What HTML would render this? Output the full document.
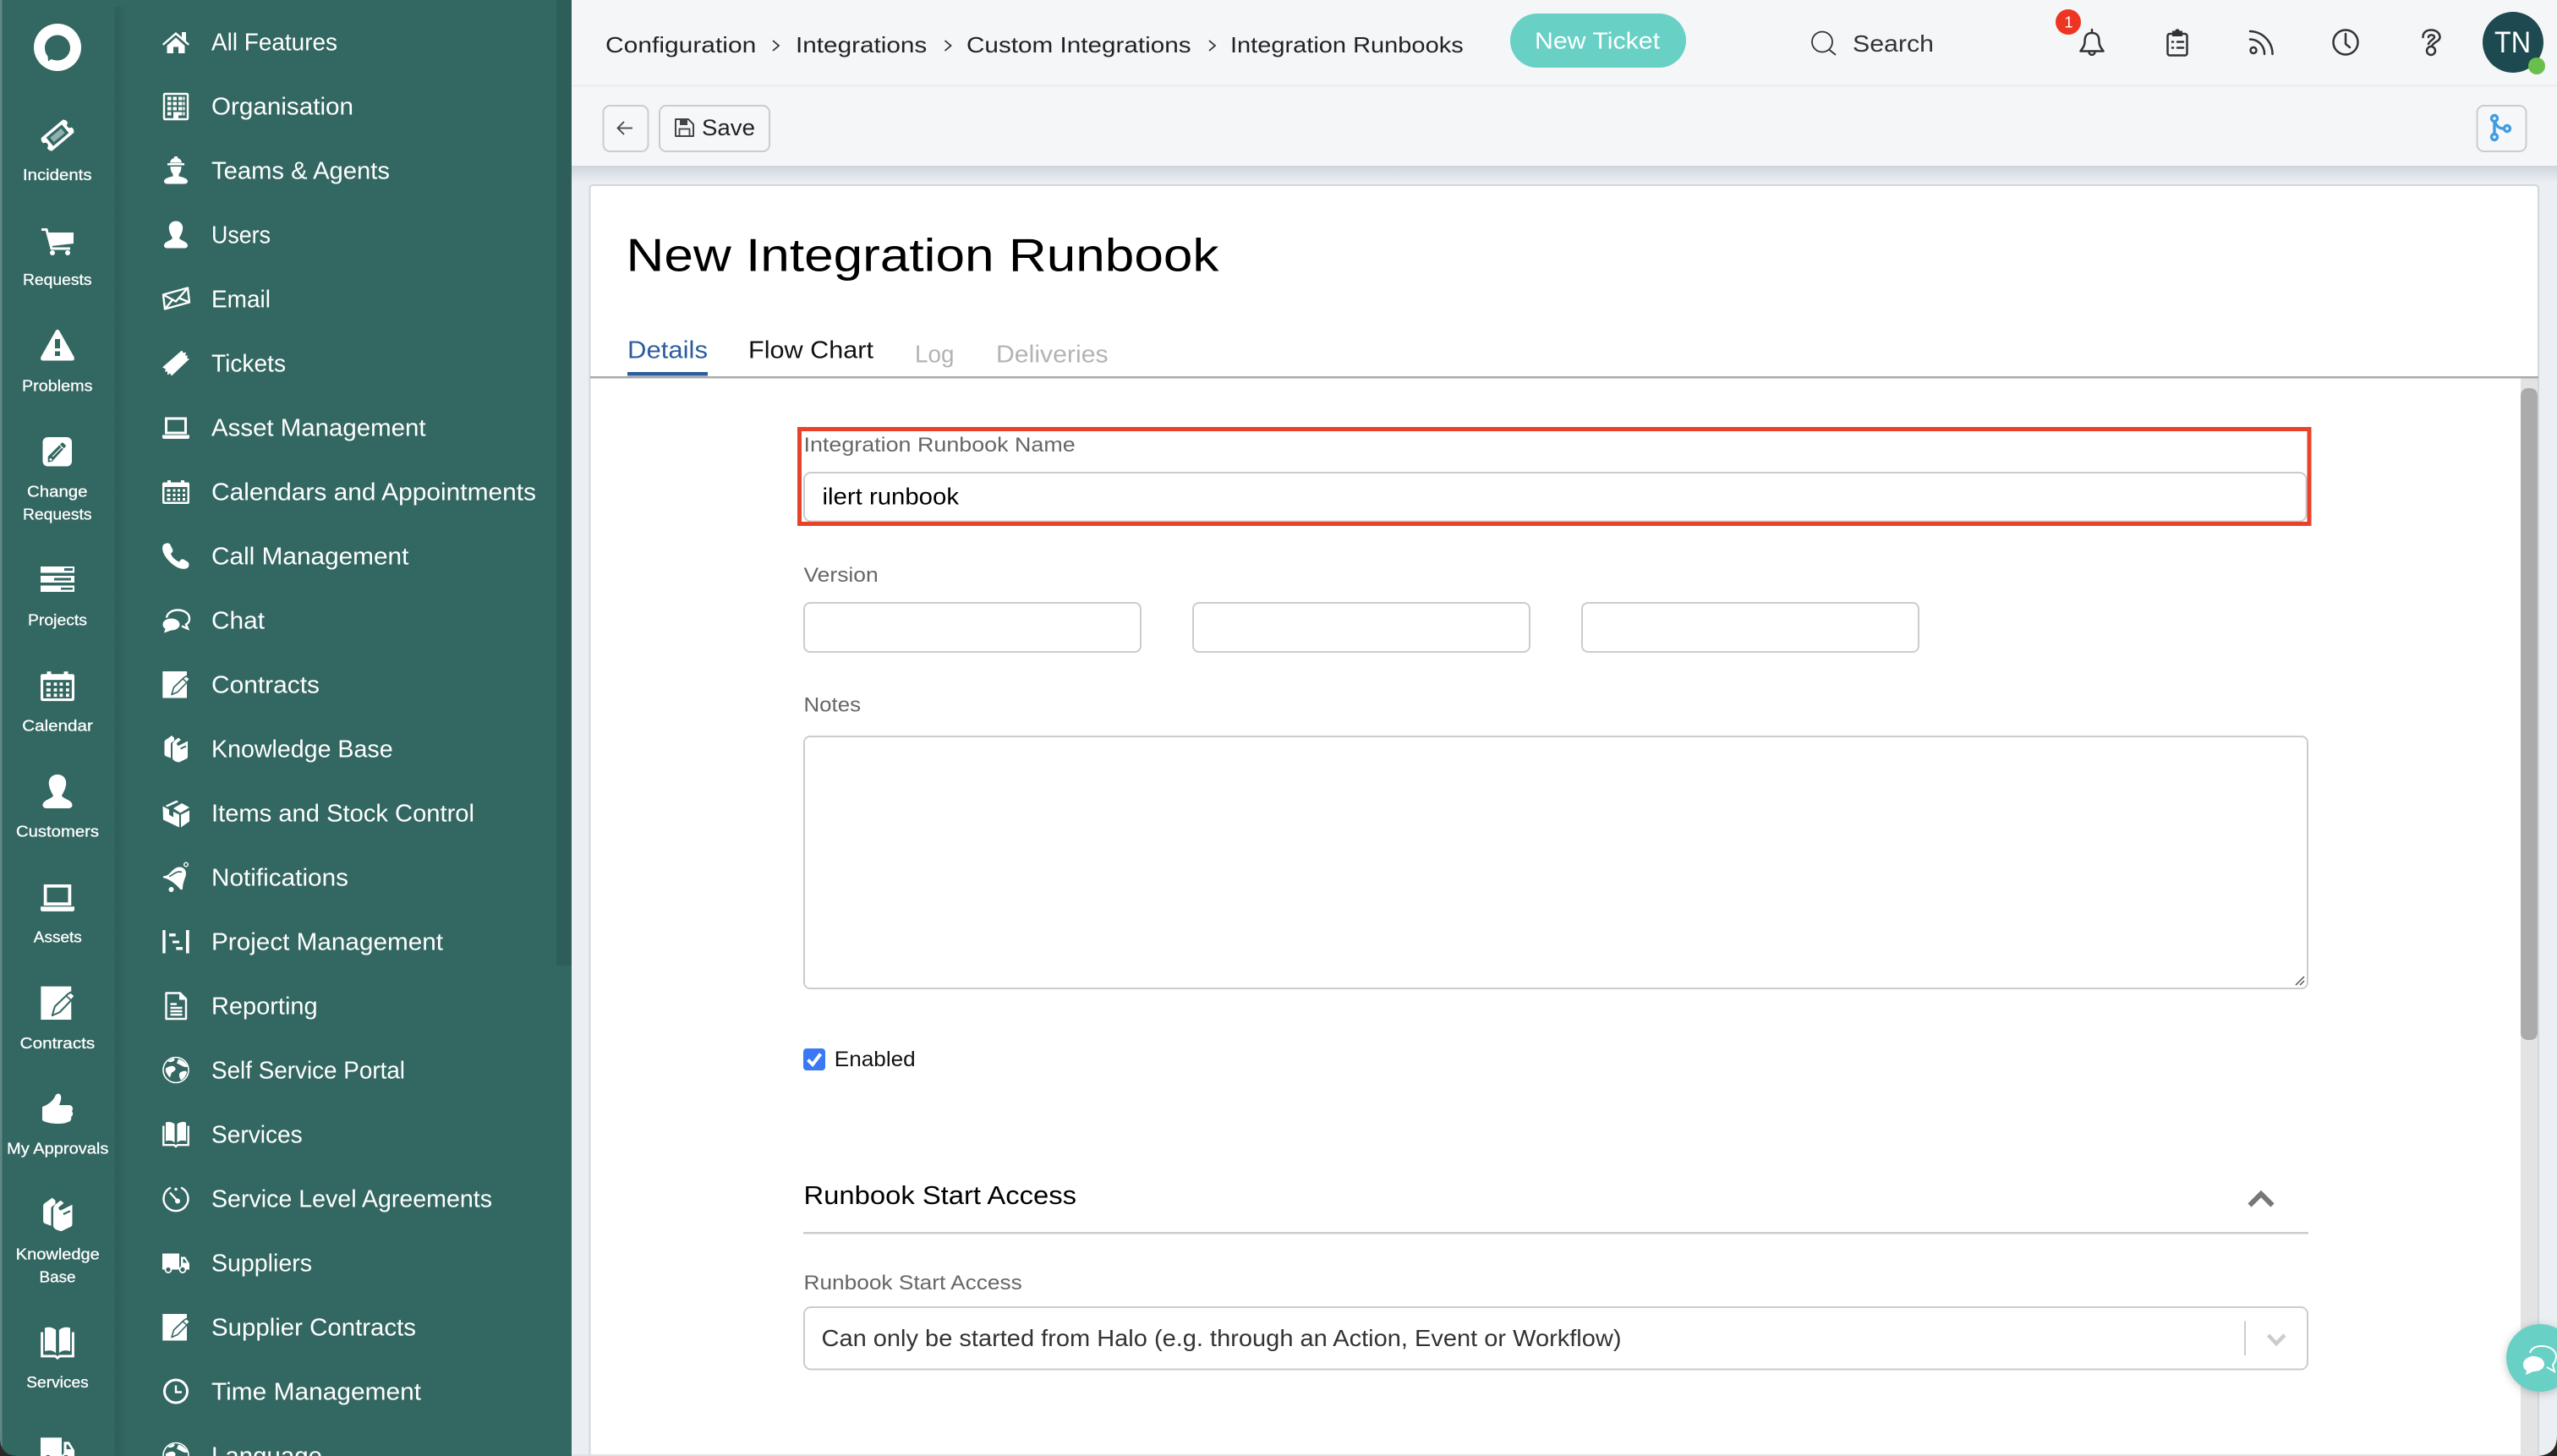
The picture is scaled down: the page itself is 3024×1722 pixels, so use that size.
<!DOCTYPE html>
<html lang="en"><head><meta charset="utf-8"><title>New Integration Runbook</title>
<style>
html,body{margin:0;padding:0;width:3024px;height:1722px;overflow:hidden;background:#ebeef3}
svg{display:block}
text{font-family:"Liberation Sans",sans-serif;white-space:pre}
.m{font-size:28.5px;fill:#fff}
.r{font-size:18.5px;fill:#fff;stroke:#fff;stroke-width:.3px}
.b{font-size:26px;fill:#222}
.l{font-size:24.5px;fill:#666}
.t{font-size:28.5px}
.w{fill:#fff}
.o{fill:none;stroke:#fff;stroke-width:2.4}
.k{fill:none;stroke:#333;stroke-width:2.5;stroke-linecap:round;stroke-linejoin:round}
.bx{fill:#fff;stroke:#ccc;stroke-width:2}
</style></head><body>
<svg xmlns="http://www.w3.org/2000/svg" width="3024" height="1722" viewBox="0 0 3024 1722">
<defs>
<linearGradient id="sh" x1="0" x2="1" y1="0" y2="0"><stop offset="0" stop-color="#2d5e59"/><stop offset="1" stop-color="#336762"/></linearGradient>
<linearGradient id="ts" x1="0" x2="0" y1="0" y2="1"><stop offset="0" stop-color="#cfd5dc"/><stop offset="1" stop-color="#ebeef3"/></linearGradient>
<filter id="fs" x="-30%" y="-30%" width="160%" height="160%"><feDropShadow dx="0" dy="2" stdDeviation="5" flood-color="#000" flood-opacity=".22"/></filter>
<clipPath id="cp"><rect x="0" y="0" width="3024" height="1722"/></clipPath>

<g id="home"><path class="w" d="M-16 2 0-12 7-6V-12H12V-1.500L16 2 14.500 3.800 0-8.800-14.500 3.800Z"/><path class="w" d="M-10.500 4 0-5.500 10.500 4V13H3V5.500H-3V13H-10.500Z"/></g>
<g id="org"><rect x="-14" y="-14.500" width="28" height="30" class="o" rx="1"/><path class="w" d="M-10-11h4.500v4h-4.500zM-3.500-11h4.500v4h-4.500zM3-11h4.500v4H3zM8.500-11h2v4h-2zM-10-5h4.500v4h-4.500zM-3.500-5h4.500v4h-4.500zM3-5h4.500v4H3zM8.500-5h2v4h-2zM-10 1h4.500v4h-4.500zM-3.500 1h4.500v4h-4.500zM3 1h4.500v4H3zM8.500 1h2v4h-2zM-10 7h4.500v4h-4.500zM3 7h4.500v4H3zM8.500 7h2v4h-2zM-3 7H3V15H-3Z"/></g>
<g id="team"><path class="w" d="M-10-8.500H10V-6H-10ZM-7-9A7 6.500 0 0 1-2-14.800V-16.500H2V-14.800A7 6.500 0 0 1 7-9Z"/><path class="w" d="M-6.500-4.500H6.500C6.500 1 4.500 3 3.500 4.500V7C8 8 14 9.500 14 13 14 15 12 16 9 16H-9C-12 16-14 15-14 13-14 9.500-8 8-3.500 7V4.500C-4.500 3-6.500 1-6.500-4.500Z"/></g>
<path id="user" class="w" d="M0-16C-6-16-9-11-8-6-7.500-2-5 2-4 4-5 7-14 8-14 13-14 15-12 16-10 16H10C12 16 14 15 14 13 14 8 5 7 4 4 5 2 7.500-2 8-6 9-11 6-16 0-16Z"/>
<g id="mail"><path class="o" stroke-linejoin="round" d="M-15-5 14-13 16 4-13 12Z"/><path class="o" d="M-15-5 0 3 14-13M-13 12-3 0M16 4 4-1"/></g>
<path id="tick" class="w" d="M-16 5 7-15 9-12 12-13 11-9 14-9 13-6 16-5-5 15-7 12-10 14-10 10-13 10-12 7Z"/>
<path id="lap" class="w" fill-rule="evenodd" d="M-13-12H13V8H-13ZM-10-9V5H10V-9ZM-16 9H16V11.500Q16 13.500 14 13.500H-14Q-16 13.500-16 11.500Z"/>
<g id="cal"><path class="w" fill-rule="evenodd" d="M-14-11H-10V-13.500H-6V-11H6V-13.500H10V-11H14Q16-11 16-9V12Q16 14.500 14 14.500H-14Q-16 14.500-16 12V-9Q-16-11-14-11ZM-13.500-5.500V12H13.500V-5.500Z"/><path class="w" d="M-10.500-3h4v3h-4zM-3.500-3h3v3h-3zM2-3h3v3H2zM8-3h3v3H8zM-10.500 2.500h4v3h-4zM-3.500 2.500h3v3h-3zM2 2.500h3v3H2zM8 2.500h3v3H8zM-10.500 7.500h4v3h-4zM-3.500 7.500h3v3h-3zM2 7.500h3v3H2zM8 7.500h3v3H8z"/></g>
<path id="phone" class="w" d="M-15-13C-13-15-9-16-7-14L-4-8C-3-6-4-4-6-3-5 1-1 5 4 7 5 5 7 3 9 4L14 7C16 9 16 12 14 14 10 17 2 15-5 9-13 2-18-7-15-13Z"/>
<g id="chat"><path class="o" stroke-width="2" d="M-11-3C-10-9-4-12 2-12 10-12 16-8 16-2 16 2 14 4 12 5L14 10 7 7"/><path class="w" d="M-15.500 5C-15.500 1-11-2-5.500-2 0-2 4.500 1 4.500 5 4.500 9 0 12-5.500 12L-14 15-12.500 10C-14.500 9-15.500 7-15.500 5Z"/></g>
<g id="con"><rect x="-15.700" y="-15.500" width="28.700" height="31.500" class="w"/><path d="M-5 12-2.500 3.500 9.500-8 12.500-10 16.500-6.500 14-3.500 2 9Z" class="w" stroke="#336762" stroke-width="1.600" stroke-linejoin="round"/><path d="M8-6.800 13-2.300" stroke="#336762" stroke-width="1.400"/></g>
<g id="kb"><path class="w" d="M-13.500-8C-13.500-10-11-11-9-12.500L-5-15.500-2-13V-9.500L-6-6.500V11L-11.500 9C-13 8.500-13.500 7.500-13.500 6Z"/><path class="w" d="M-4-5C-4-8-1-10 3-13L6-10.500 1-6.500C1-5 2-3.500 3-3.500L14-9V9C14 11 13 12 11 12.500L4 16C1 16-4 14-4 11Z"/><path d="M5.500 0 12-3" stroke="#336762" stroke-width="1.800"/></g>
<g id="box"><path class="w" d="M-3-5.500 7-11.500 16-6.500 5.300 0ZM6 2 16-3V10L6 17ZM-15.500-8-8-4V2L-3 5V-1.500L4 2V17L-15 8ZM-12-9 1-15 3-13-10.500-7Z"/></g>
<g id="bell" transform="translate(2 0)"><path class="w" d="M-16.500-1.500C-12-1-9-5-6-8-2-12 2-13 6.500-11 10-9 10.500-5 9.500-1 8 3 6 8 6 13.500 6 15 4 15 3 14-3 7-10 2-16 1-17 1-17.500-1-16.500-1.500Z"/><path d="M-10-1C-5-2-3-8 5-6" fill="none" stroke="#336762" stroke-width="1.600"/><circle cx="-7.500" cy="14.500" r="3" class="w"/><circle cx="10" cy="-15" r="2.300" fill="none" stroke="#fff" stroke-width="1.400"/></g>
<path id="proj" class="w" d="M-15.700-13.500h3.400v27.500h-3.400zM12-13.500h3.700v27.500H12zM-8-9.500H-.3V-6H-8ZM-4-1H4V2H-4ZM.3 6.500H8V10H.3Z"/>
<g id="rep"><path class="o" stroke-linejoin="round" d="M-11.500-15H5L12-8V15.500H-11.500Z"/><path class="w" d="M4-15 12-7H4Z"/><path class="o" stroke-width="2" d="M-6.500-2H1M-6.500 2.500H7.500M-6.500 6.500H7.500M-6.500 10.500H7.500"/></g>
<g id="globe"><circle r="15" fill="none" stroke="#fff" stroke-width="1.600"/><path class="w" d="M-12-2C-8-5-3-6-1-3 1 0-3 2-5 3L-7 9C-9 7-13 2-12-2ZM3-13C8-12 12-8 14-4 10-2 6-6 1-8ZM5 3C8 1 13 0 13 3 12 7 9 11 6 12 4 9 3 5 5 3ZM-3-14C-1-13-1-11-4-10-7-9-9-9-9-11Z"/></g>
<g id="book"><path class="w" d="M-1.500-12C-5-15-9-15-12-14V8C-8 7-4 7-1.500 10ZM1.500-12C5-15 9-15 12-14V8C8 7 4 7 1.500 10Z"/><path class="o" stroke-width="2.600" d="M-14.700-10V12.700H-2L0 14.500 2 12.700H14.700V-10"/></g>
<g id="sla"><path class="o" stroke-width="3" stroke-linecap="round" d="M-7-12.500A14.500 14.500 0 1 0 7-12.500"/><circle cy="-11" r="1.700" class="w"/><path class="o" stroke-width="2.500" d="M3 4-7-7"/><circle cx="2" cy="3" r="3" class="w"/></g>
<g id="truck"><rect x="-16" y="-11" width="20" height="17" class="w"/><path class="w" fill-rule="evenodd" d="M6-7H11L16 1V6H6ZM8.500-4.500V0H13L10-4.500Z"/><rect x="-16" y="6" width="32" height="2" class="w"/><circle cx="-9" cy="8" r="3.500" fill="#336762" stroke="#fff" stroke-width="1.800"/><circle cx="8" cy="8" r="3.500" fill="#336762" stroke="#fff" stroke-width="1.800"/></g>
<g id="clock"><circle r="13.500" fill="none" stroke="#fff" stroke-width="3"/><path class="o" stroke-width="2.600" d="M0-7V1L7 1"/></g>
</defs>

<g clip-path="url(#cp)">
<!-- page bg -->
<rect width="3024" height="1722" fill="#ebeef3"/>
<!-- top bars -->
<rect x="676" width="2348" height="196" fill="#f5f6f8"/>
<rect x="676" y="100" width="2348" height="2.500" fill="#ecedf1"/>
<rect x="676" y="196" width="2348" height="20" fill="url(#ts)"/>

<!-- sidebar -->
<rect width="676" height="1722" fill="#336762"/>
<rect x="136" y="8" width="14" height="1714" fill="url(#sh)"/>
<rect x="658" width="18" height="1142" fill="#2e5e59"/>
<rect width="2.500" height="1722" fill="#5f8783"/>

<!-- logo -->
<circle cx="68" cy="56" r="28" fill="#fff"/>
<path d="M68 41.500C76 41.500 83 48 83 56.500 83 65 76 71.500 68 71.500 65 71.500 62.500 70.500 60.500 70L57 72.500 56.500 66.500C54 63.500 53 60 53 56.500 53 48 60 41.500 68 41.500Z" fill="#336762"/>

<!-- rail icons -->
<g transform="translate(68 160) rotate(-40)"><path class="w" d="M-19-7-17-10H17L19-7V-3.500A3.500 3.500 0 0 0 19 3.500V7L17 10H-17L-19 7V3.500A3.500 3.500 0 0 0-19-3.500Z"/><rect x="-12" y="-6.500" width="24" height="13" fill="#336762"/><rect x="-8.500" y="-3.500" width="17" height="7" fill="#8fb0ac"/></g>
<g transform="translate(68 286)"><path class="w" d="M-11-11H19V2L-7 5Z"/><path d="M-19-14.500H-13L-7 8H15" fill="none" stroke="#fff" stroke-width="3"/><circle cx="-6" cy="13" r="3" class="w"/><circle cx="12" cy="13" r="3" class="w"/></g>
<g transform="translate(68 408)"><path class="w" fill-rule="evenodd" d="M-2-17Q0-19.500 2-17L19.500 14Q21 18.500 17 18.500H-17Q-21 18.500-19.500 14ZM-3-7V4H3V-7ZM-3 7.500V13H3V7.500Z"/></g>
<g transform="translate(68 534)"><rect x="-17.500" y="-17" width="34.500" height="34.500" rx="6" class="w"/><path d="M-11.300 12.700-11.300 6 4.700-10Q6-11 7-10L9.500-7.500Q10.500-6.500 9.300-5.500L-6.300 11.700Z" fill="#336762"/><path d="M-6 6 5-5M2.500-8 7.500-3" stroke="#fff" stroke-width="1.200"/><circle cx="-8" cy="9.500" r="1.500" class="w"/></g>
<g transform="translate(68 685)"><path class="w" fill-rule="evenodd" d="M-20-15H20V-7.500H-20ZM8-13V-10H18V-13ZM-20-4H20V4H-20ZM-4-1.500V1.500H16V-1.500ZM-20 7.500H20V15H-20ZM4 10V12.500H18V10Z"/></g>
<use href="#cal" transform="translate(68 811) scale(1.25)"/>
<use href="#user" transform="translate(68 936) scale(1.25)"/>
<use href="#lap" transform="translate(68 1061) scale(1.25)"/>
<use href="#con" transform="translate(68 1186) scale(1.25)"/>
<path class="w" transform="translate(68 1311)" d="M-18-2C-12-4-6-8-3-14-2-18 3-19 4-15 5-11 3-7 2-4H14C18-4 19 1 17 3 19 6 18 9 16 10 17 13 15 16 12 16 8 19-10 19-18 14Z"/>
<use href="#kb" transform="translate(68 1436) scale(1.25)"/>
<use href="#book" transform="translate(68 1588) scale(1.25)"/>
<use href="#truck" transform="translate(68 1714) scale(1.25)"/>

<!-- rail labels -->
<text class="r" x="27" y="212.800" textLength="81.500" lengthAdjust="spacingAndGlyphs">Incidents</text>
<text class="r" x="27" y="336.800" textLength="81.500" lengthAdjust="spacingAndGlyphs">Requests</text>
<text class="r" x="26" y="462.400" textLength="83.500" lengthAdjust="spacingAndGlyphs">Problems</text>
<text class="r" x="32" y="587.500" textLength="71.500" lengthAdjust="spacingAndGlyphs">Change</text>
<text class="r" x="27" y="614.400" textLength="81.500" lengthAdjust="spacingAndGlyphs">Requests</text>
<text class="r" x="33" y="739.400" textLength="70" lengthAdjust="spacingAndGlyphs">Projects</text>
<text class="r" x="26.300" y="864.700" textLength="83.500" lengthAdjust="spacingAndGlyphs">Calendar</text>
<text class="r" x="19" y="989.700" textLength="98" lengthAdjust="spacingAndGlyphs">Customers</text>
<text class="r" x="39.800" y="1114.500" textLength="57" lengthAdjust="spacingAndGlyphs">Assets</text>
<text class="r" x="23.700" y="1239.900" textLength="88.600" lengthAdjust="spacingAndGlyphs">Contracts</text>
<text class="r" x="8" y="1364.700" textLength="120.400" lengthAdjust="spacingAndGlyphs">My Approvals</text>
<text class="r" x="18.800" y="1489.500" textLength="99" lengthAdjust="spacingAndGlyphs">Knowledge</text>
<text class="r" x="46.500" y="1516.400" textLength="43" lengthAdjust="spacingAndGlyphs">Base</text>
<text class="r" x="31.300" y="1641.200" textLength="73.400" lengthAdjust="spacingAndGlyphs">Services</text>

<!-- main menu icons -->
<use href="#home" transform="translate(208 50)"/>
<use href="#org" transform="translate(208 125.500)"/>
<use href="#team" transform="translate(208 201.500)"/>
<use href="#user" transform="translate(208 277.500)"/>
<use href="#mail" transform="translate(208 353.500)"/>
<use href="#tick" transform="translate(208 429.500)"/>
<use href="#lap" transform="translate(208 505.500)"/>
<use href="#cal" transform="translate(208 581.500)"/>
<use href="#phone" transform="translate(208 657.500)"/>
<use href="#chat" transform="translate(208 733.500)"/>
<use href="#con" transform="translate(208 809.500)"/>
<use href="#kb" transform="translate(208 885.500)"/>
<use href="#box" transform="translate(208 961.500)"/>
<use href="#bell" transform="translate(208 1037.500)"/>
<use href="#proj" transform="translate(208 1113.500)"/>
<use href="#rep" transform="translate(208 1189.500)"/>
<use href="#globe" transform="translate(208 1265.500)"/>
<use href="#book" transform="translate(208 1341.500)"/>
<use href="#sla" transform="translate(208 1417.500)"/>
<use href="#truck" transform="translate(208 1493.500)"/>
<use href="#con" transform="translate(208 1569.500)"/>
<use href="#clock" transform="translate(208 1645.500)"/>
<use href="#globe" transform="translate(208 1721.500)"/>

<!-- main menu text -->
<text class="m" x="250" y="59.300" textLength="149" lengthAdjust="spacingAndGlyphs">All Features</text>
<text class="m" x="250" y="135.300" textLength="168" lengthAdjust="spacingAndGlyphs">Organisation</text>
<text class="m" x="250" y="211.300" textLength="211" lengthAdjust="spacingAndGlyphs">Teams &amp; Agents</text>
<text class="m" x="250" y="287.300" textLength="70" lengthAdjust="spacingAndGlyphs">Users</text>
<text class="m" x="250" y="363.300" textLength="70" lengthAdjust="spacingAndGlyphs">Email</text>
<text class="m" x="250" y="439.300" textLength="88" lengthAdjust="spacingAndGlyphs">Tickets</text>
<text class="m" x="250" y="515.300" textLength="253.600" lengthAdjust="spacingAndGlyphs">Asset Management</text>
<text class="m" x="250" y="591.300" textLength="384" lengthAdjust="spacingAndGlyphs">Calendars and Appointments</text>
<text class="m" x="250" y="667.300" textLength="233.400" lengthAdjust="spacingAndGlyphs">Call Management</text>
<text class="m" x="250" y="743.300" textLength="63" lengthAdjust="spacingAndGlyphs">Chat</text>
<text class="m" x="250" y="819.300" textLength="128" lengthAdjust="spacingAndGlyphs">Contracts</text>
<text class="m" x="250" y="895.300" textLength="214.600" lengthAdjust="spacingAndGlyphs">Knowledge Base</text>
<text class="m" x="250" y="971.300" textLength="311" lengthAdjust="spacingAndGlyphs">Items and Stock Control</text>
<text class="m" x="250" y="1047.300" textLength="162" lengthAdjust="spacingAndGlyphs">Notifications</text>
<text class="m" x="250" y="1123.300" textLength="274" lengthAdjust="spacingAndGlyphs">Project Management</text>
<text class="m" x="250" y="1199.300" textLength="125.600" lengthAdjust="spacingAndGlyphs">Reporting</text>
<text class="m" x="250" y="1275.300" textLength="229" lengthAdjust="spacingAndGlyphs">Self Service Portal</text>
<text class="m" x="250" y="1351.300" textLength="107.700" lengthAdjust="spacingAndGlyphs">Services</text>
<text class="m" x="250" y="1427.300" textLength="332" lengthAdjust="spacingAndGlyphs">Service Level Agreements</text>
<text class="m" x="250" y="1503.300" textLength="119" lengthAdjust="spacingAndGlyphs">Suppliers</text>
<text class="m" x="250" y="1579.300" textLength="242" lengthAdjust="spacingAndGlyphs">Supplier Contracts</text>
<text class="m" x="250" y="1655.300" textLength="248" lengthAdjust="spacingAndGlyphs">Time Management</text>
<text class="m" x="250" y="1731.300" textLength="131" lengthAdjust="spacingAndGlyphs">Language</text>

<!-- breadcrumb -->
<text class="b" x="716" y="62" textLength="178.300" lengthAdjust="spacingAndGlyphs">Configuration</text>
<path d="M914 48 921 54 914 60" fill="none" stroke="#333" stroke-width="1.800"/>
<text class="b" x="941" y="62" textLength="155.300" lengthAdjust="spacingAndGlyphs">Integrations</text>
<path d="M1117.500 48 1124.500 54 1117.500 60" fill="none" stroke="#333" stroke-width="1.800"/>
<text class="b" x="1143" y="62" textLength="265.600" lengthAdjust="spacingAndGlyphs">Custom Integrations</text>
<path d="M1430 48 1437 54 1430 60" fill="none" stroke="#333" stroke-width="1.800"/>
<text class="b" x="1455" y="62" textLength="275.700" lengthAdjust="spacingAndGlyphs">Integration Runbooks</text>

<!-- New ticket -->
<rect x="1786" y="16" width="208" height="64" rx="32" fill="#68d0c5"/>
<text x="1815" y="57.500" font-size="27.500" fill="#fff" textLength="148" lengthAdjust="spacingAndGlyphs">New Ticket</text>

<!-- search -->
<circle cx="2155" cy="49.500" r="12" fill="none" stroke="#333" stroke-width="1.800"/>
<path d="M2163 58.500 2171 65" stroke="#333" stroke-width="1.800"/>
<text x="2191" y="61" font-size="27.500" fill="#333" textLength="96" lengthAdjust="spacingAndGlyphs">Search</text>

<!-- header icons -->
<path class="k" d="M2474 39C2466 39 2465.500 45 2465.500 50 2465.500 55 2462 58 2460.500 60.500H2487.500C2486 58 2482.500 55 2482.500 50 2482.500 45 2482 39 2474 39ZM2474 35V39M2470.500 61.500C2471 66 2477 66 2477.500 61.500"/>
<circle cx="2446" cy="26" r="15" fill="#ee3524"/>
<text x="2441.500" y="32.500" font-size="18" fill="#fff">1</text>
<rect x="2563.500" y="40" width="23" height="25.500" rx="2.500" class="k"/>
<path d="M2569 36.500H2572.500C2572.500 33.500 2577.500 33.500 2577.500 36.500H2581V43H2569Z" fill="#333"/>
<path d="M2575 49.500H2582M2575 56.500H2582M2569 49.500H2570M2569 56.500H2570" class="k" stroke-width="2"/>
<circle cx="2665" cy="59.500" r="3.500" class="k"/>
<path class="k" d="M2661 46.500A17 17 0 0 1 2678 64M2661 37A27 27 0 0 1 2687.500 64"/>
<circle cx="2774" cy="50" r="14.500" class="k"/>
<path class="k" d="M2774 40V52L2779 56"/>
<path class="k" d="M2865.500 44C2865.500 38 2870 35.500 2875 35.500 2881 35.500 2885.500 39 2885.500 44 2885.500 49 2878 49.500 2876 54.500"/>
<path class="k" stroke-width="2" d="M2872 44C2872 40.500 2879 40.500 2879 44 2879 46 2873.500 48 2872 52"/>
<circle cx="2875" cy="60" r="5" class="k"/>

<!-- avatar -->
<circle cx="2972" cy="50" r="36" fill="#1d4a50"/>
<text x="2950" y="62" font-size="35" fill="#fff" textLength="43" lengthAdjust="spacingAndGlyphs">TN</text>
<circle cx="3000" cy="78" r="10" fill="#6abf4b"/>

<!-- toolbar -->
<rect x="713.500" y="125" width="53" height="54" rx="8" fill="#f6f7f9" stroke="#ccc" stroke-width="2"/>
<path d="M748 151.500H731M738 144 730.500 151.500 738 159" fill="none" stroke="#444" stroke-width="1.800"/>
<rect x="780" y="125" width="130" height="54" rx="8" fill="#f6f7f9" stroke="#ccc" stroke-width="2"/>
<path d="M799 141H814L820 147V161H799Z" fill="none" stroke="#444" stroke-width="2" stroke-linejoin="round"/>
<path d="M804 141H813V148H804Z" fill="#444"/><rect x="803.500" y="152.500" width="12" height="8.500" fill="none" stroke="#444" stroke-width="1.800"/>
<text x="830" y="160" font-size="26.500" fill="#222" textLength="63" lengthAdjust="spacingAndGlyphs">Save</text>
<rect x="2929.500" y="125" width="58" height="54" rx="8" fill="#f6f7f9" stroke="#ccc" stroke-width="2"/>
<g fill="none" stroke="#3f9de2" stroke-width="3.400"><path d="M2950 144V158M2951 145C2953 150 2956 152 2961 152"/><circle cx="2950" cy="140" r="3.500"/><circle cx="2950" cy="162" r="3.500"/><circle cx="2965" cy="152" r="3.500"/></g>

<!-- card -->
<path d="M697.500 1722V223Q697.500 219 701.500 219H2998Q3002 219 3002 223V1722Z" fill="#fff" stroke="#d1d7de" stroke-width="2"/>

<text x="740.500" y="320.700" font-size="55" fill="#000" textLength="701" lengthAdjust="spacingAndGlyphs">New Integration Runbook</text>

<!-- tabs -->
<text class="t" x="742" y="423.300" fill="#2b5d9e" textLength="95" lengthAdjust="spacingAndGlyphs">Details</text>
<rect x="742" y="440" width="95" height="4.500" fill="#2b5d9e"/>
<text class="t" x="885" y="423.300" fill="#111" textLength="148" lengthAdjust="spacingAndGlyphs">Flow Chart</text>
<text class="t" x="1082" y="428.700" fill="#b3b3b3" textLength="46.500" lengthAdjust="spacingAndGlyphs">Log</text>
<text class="t" x="1178" y="428.700" fill="#b3b3b3" textLength="132.600" lengthAdjust="spacingAndGlyphs">Deliveries</text>
<rect x="698" y="445" width="2304" height="2.500" fill="#aaa"/>

<!-- scrollbar -->
<rect x="2981" y="447.500" width="20" height="1274" fill="#e3e3e3"/>
<path d="M2981 1221V469Q2981 459 2991 459 3001 459 3001 469V1221Q3001 1230 2991 1230 2981 1230 2981 1221Z" fill="#ababab"/>

<!-- form -->
<text class="l" x="950.500" y="534" textLength="321.200" lengthAdjust="spacingAndGlyphs">Integration Runbook Name</text>
<rect x="951" y="559" width="1776.500" height="57.500" rx="8" class="bx"/>
<text x="972.500" y="596.700" font-size="28" fill="#000" textLength="161.500" lengthAdjust="spacingAndGlyphs">ilert runbook</text>
<rect x="945.500" y="507.500" width="1785.500" height="112" fill="none" stroke="#e8432a" stroke-width="5"/>

<text class="l" x="950.500" y="688" textLength="88.200" lengthAdjust="spacingAndGlyphs">Version</text>
<rect x="951" y="713" width="398" height="58" rx="7" class="bx"/>
<rect x="1411" y="713" width="398" height="58" rx="7" class="bx"/>
<rect x="1871" y="713" width="398" height="58" rx="7" class="bx"/>

<text class="l" x="950.500" y="841.700" textLength="67.500" lengthAdjust="spacingAndGlyphs">Notes</text>
<rect x="951" y="871" width="1778" height="298" rx="7" class="bx"/>
<path d="M2715 1165 2725 1155M2720 1165 2725 1160" stroke="#555" stroke-width="1.500"/>

<rect x="950" y="1240" width="26" height="26" rx="4" fill="#3b78f5"/>
<path d="M955.500 1253.500 961 1259 970.500 1246.500" fill="none" stroke="#fff" stroke-width="4"/>
<text x="986.800" y="1261" font-size="25" fill="#111" textLength="95.900" lengthAdjust="spacingAndGlyphs">Enabled</text>

<text x="950.500" y="1424" font-size="31" fill="#000" textLength="322.500" lengthAdjust="spacingAndGlyphs">Runbook Start Access</text>
<rect x="950" y="1457" width="1780" height="2.500" fill="#ccc"/>
<path d="M2660.500 1425.500 2674 1412 2687.500 1425.500" fill="none" stroke="#777" stroke-width="6"/>

<text class="l" x="950.500" y="1525" textLength="258.200" lengthAdjust="spacingAndGlyphs">Runbook Start Access</text>
<rect x="951" y="1546" width="1778" height="73.500" rx="8" class="bx"/>
<text x="971.500" y="1592" font-size="27.500" fill="#333" textLength="946" lengthAdjust="spacingAndGlyphs">Can only be started from Halo (e.g. through an Action, Event or Workflow)</text>
<rect x="2654" y="1562.500" width="2" height="40.500" fill="#ccc"/>
<path d="M2682.500 1579 2692 1589 2702 1579" fill="none" stroke="#ccc" stroke-width="4.500"/>

<!-- fab -->
<circle cx="3004" cy="1606" r="40" fill="#68d0c5" filter="url(#fs)"/>
<path d="M2992 1600C2994 1594 3000 1592 3006 1592 3015 1592 3023 1597 3023 1604 3023 1609 3021 1612 3019 1614L3021 1622 3012 1617" fill="none" stroke="#fff" stroke-width="2"/>
<path d="M2984 1614C2984 1608 2990 1604 2996 1604 3003 1604 3009 1608 3009 1613 3009 1619 3003 1622 2996 1622L2987 1626 2988 1621C2985 1619 2984 1617 2984 1614Z" fill="#fff"/>

<!-- window corners & bottom edge -->
<rect x="676" y="1720" width="2348" height="2" fill="#dde2e8"/>
<path d="M0 1700Q0 1722 22 1722H0Z" fill="#2a2a2a"/>
<path d="M3024 1698Q3024 1720 3002 1722H3024Z" fill="#2a2320"/>
</g>
</svg>
</body></html>
